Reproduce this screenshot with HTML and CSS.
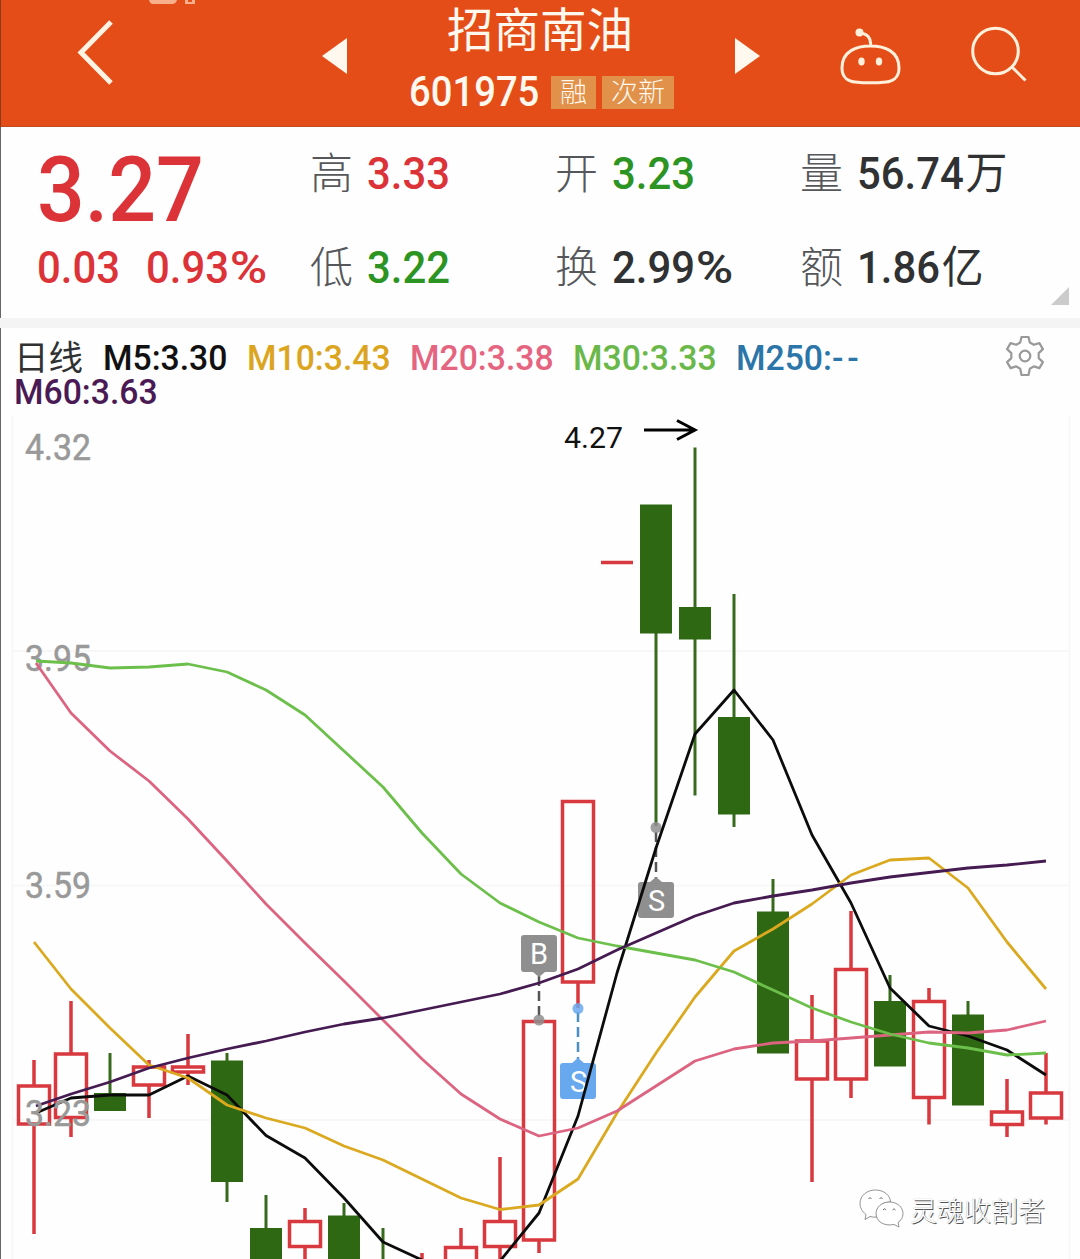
FILE: index.html
```html
<!DOCTYPE html>
<html lang="zh-CN">
<head>
  <meta charset="utf-8"/>
  <title>招商南油 601975</title>
  <link rel="stylesheet" href="styles.css">
</head>
<body>
  <!-- Header -->
  <header class="topbar">
    <svg class="back" viewBox="0 0 44 70" width="44" height="70"><path d="M37 5 7 35.500 37 66"/></svg>
    <svg class="status" viewBox="0 0 50 5" width="50" height="5"><path d="M1 0h28q-1 4-5 4H5Q2 4 1 0zM37 0h3v2h4V0h3v4H37z"/></svg>
    <svg class="prev" viewBox="0 0 25 36" width="25" height="36"><path d="M25 0v36L0 18z"/></svg>
    <div class="stock">
      <div class="name">招商南油</div>
      <div class="code">
        <span class="num">601975</span>
        <span class="badge">融</span>
        <span class="badge">次新</span>
      </div>
    </div>
    <svg class="next" viewBox="0 0 25 36" width="25" height="36"><path d="M0 0v36l25-18z"/></svg>
    <svg class="robot" viewBox="0 0 64 58" width="64" height="58">
      <path d="M32.500 19c14 0 28.500 5 28.500 22 0 10-7 13.500-13 14-9 1-22 1-31 0-6-.5-13-4-13-14 0-17 14.500-22 28.500-22zM32.500 19c1-8-3-12.500-11-13"/>
      <circle class="dot" cx="21.500" cy="5.500" r="4"/>
      <ellipse class="dot" cx="23.500" cy="34.500" rx="3.200" ry="4"/>
      <ellipse class="dot" cx="41" cy="34.500" rx="3.200" ry="4"/>
    </svg>
    <svg class="search" viewBox="0 0 58 58" width="58" height="58"><circle cx="25.500" cy="25" r="22.800"/><path d="M42 41 55.500 54.500"/></svg>
  </header>

  <!-- Quote -->
  <section class="quote">
    <div class="price"><span class="num red">3.27</span></div>
    <div class="cell"><label>高</label><span class="num red">3.33</span></div>
    <div class="cell"><label>开</label><span class="num green">3.23</span></div>
    <div class="cell"><label>量</label><span class="num">56.74<i>万</i></span></div>
    <div class="change"><span class="num red">0.03</span><span class="num red">0.93<b>%</b></span></div>
    <div class="cell"><label>低</label><span class="num green">3.22</span></div>
    <div class="cell"><label>换</label><span class="num">2.99<b>%</b></span></div>
    <div class="cell"><label>额</label><span class="num">1.86<i>亿</i></span></div>
    <span class="corner"></span>
  </section>

  <!-- Moving averages -->
  <section class="legend">
    <div class="row">
      <span class="period">日线</span>
      <span class="ma m5">M5:3.30</span>
      <span class="ma m10">M10:3.43</span>
      <span class="ma m20">M20:3.38</span>
      <span class="ma m30">M30:3.33</span>
      <span class="ma m250">M250:<b>--</b></span>
      <svg class="gear" viewBox="0 0 42 42" width="42" height="42">
        <path d="M17.500 2h7l1.300 5.500 4 2.300 5.600-1.700 3.500 6-4.200 4v5l4.200 4-3.500 6-5.600-1.700-4 2.300L24.500 40h-7l-1.300-6.300-4-2.300-5.600 1.700-3.500-6 4.200-4v-5l-4.200-4 3.500-6 5.600 1.700 4-2.300z"/>
        <circle cx="21" cy="21" r="5.300"/>
      </svg>
    </div>
    <div class="row"><span class="ma m60">M60:3.63</span></div>
  </section>

  <!-- K line chart -->
  <svg class="chart" viewBox="0 411 1080 848" width="1080" height="848">
    <path class="grid" d="M12 651H1069M12 885.500H1069M12 1120H1069M12.500 416V1259M1069.500 416V1259"/>

    <g class="axis">
      <text x="25" y="459.500" textLength="66" lengthAdjust="spacingAndGlyphs">4.32</text>
      <text x="25" y="670.500" textLength="66" lengthAdjust="spacingAndGlyphs">3.95</text>
      <text x="25" y="898" textLength="66" lengthAdjust="spacingAndGlyphs">3.59</text>
    </g>

    <g class="up">
      <path d="M34 1060V1086M34 1124V1234M71 1001V1054M71 1117V1137M149 1060V1067M149 1085V1118M188 1034V1067M188 1072V1085M305 1208V1221M305 1247V1259M422 1253V1259M461 1228V1247M500 1157V1221M500 1247V1259M539 1240V1253M578 982V1008M812 995V1041M812 1079V1182M851 911V970M851 1079V1098M929 988V1002M929 1097V1124.500M1007 1079V1112M1007 1125V1137M1046 1053V1093M1046 1118V1124.500M601 562.500H633"/>
      <rect x="18.500" y="1086" width="31" height="38"/>
      <rect x="55.500" y="1054" width="31" height="63.500"/>
      <rect x="133.500" y="1067" width="31" height="18"/>
      <rect x="172.500" y="1067" width="31" height="5"/>
      <rect x="289.500" y="1221.500" width="31" height="25"/>
      <rect x="445.500" y="1247.500" width="31" height="25"/>
      <rect x="484.500" y="1221.500" width="31" height="25"/>
      <rect x="523.500" y="1021.500" width="31" height="218.500"/>
      <rect x="562.500" y="801.500" width="31" height="180.500"/>
      <rect x="796.500" y="1041" width="31" height="38"/>
      <rect x="835.500" y="969.500" width="31" height="109.500"/>
      <rect x="913.500" y="1001.500" width="31" height="96"/>
      <rect x="991.500" y="1112" width="31" height="12.500"/>
      <rect x="1030.500" y="1093" width="31" height="25"/>
    </g>

    <g class="down">
      <path d="M110 1053V1095M227 1053V1202M266 1195V1230M344 1203V1220M383 1228V1259M656 630V826M695 447.500V795.500M734 594V827M773 879V915M890 975V1005M968 1001V1020"/>
      <rect x="94" y="1093" width="32" height="18"/>
      <rect x="211" y="1060.500" width="32" height="121.500"/>
      <rect x="250" y="1228" width="32" height="40"/>
      <rect x="328" y="1215.500" width="32" height="50"/>
      <rect x="640" y="504.500" width="32" height="129"/>
      <rect x="679" y="607" width="32" height="32.500"/>
      <rect x="718" y="717" width="32" height="97.500"/>
      <rect x="757" y="911.500" width="32" height="142"/>
      <rect x="874" y="1001" width="32" height="65.500"/>
      <rect x="952" y="1014.500" width="32" height="91"/>
    </g>

    <!-- Trade marks -->
    <g class="mark">
      <path class="stem" d="M539 976V1020"/>
      <circle cx="539" cy="1020" r="5.500"/>
      <path d="M524 935h30q3 0 3 3v31q0 3-3 3h-9l-6 5-6-5h-9q-3 0-3-3v-31q0-3 3-3z"/>
      <text x="539" y="963.500">B</text>
      <path class="stem" d="M656 832V880"/>
      <circle cx="656" cy="827.500" r="5.500"/>
      <path d="M641 882h9l6-5 6 5h9q3 0 3 3v30q0 3-3 3h-30q-3 0-3-3v-30q0-3 3-3z"/>
      <text x="656.500" y="911">S</text>
    </g>
    <g class="mark blue">
      <path class="stem" d="M578 1012V1060"/>
      <circle cx="578" cy="1008.500" r="5.500"/>
      <path d="M563 1063h9l6-5 6 5h9q3 0 3 3v30q0 3-3 3h-30q-3 0-3-3v-30q0-3 3-3z"/>
      <text x="578.500" y="1091.500">S</text>
    </g>

    <g class="lines">
      <polyline class="l5" points="36,1113 71,1098 110,1095 149,1095 188,1076 227,1095 266,1135.500 305,1158 344,1198 383,1242 422,1260 461,1275 500,1261 539,1213 578,1116 617,973 656,848 695,734 734,690 773,740 812,835 851,903 890,988 929,1026 968,1036 1007,1050 1046,1075"/>
      <polyline class="l10" points="34,942 71,989 110,1028 149,1065 188,1078 227,1105 266,1118 305,1128 344,1146 383,1160 422,1179 461,1198 500,1209.500 539,1205 578,1179 617,1113 656,1053 695,997 734,951 773,929 812,904 851,875 890,860 929,858 968,888 1007,942 1046,989"/>
      <polyline class="l20" points="36,663 71,713 110,751 149,781 188,819 227,861 266,904 305,943 344,981 383,1020 422,1059 461,1094 500,1119 539,1136 578,1128 617,1111 656,1086 695,1061 734,1049 773,1043 812,1041 851,1038 890,1035 929,1032 968,1033 1007,1030 1046,1021"/>
      <polyline class="l30" points="36,661 71,663 110,668 149,667 188,664 227,672 266,690 305,715 344,751 383,787 422,833 461,874 500,903 539,922 578,938 617,946 656,953 695,960 734,972 773,990 812,1008 851,1022 890,1034 929,1043 968,1048 1007,1055 1046,1053"/>
      <polyline class="l60" points="36,1106 71,1094 110,1082 149,1068 188,1058 227,1049 266,1041 305,1032 344,1024 383,1018 422,1010 461,1002 500,994 539,983 578,969 617,950 656,933 695,916 734,903 773,896 812,890 851,883 890,877 929,872.500 968,868 1007,865 1046,861"/>
    </g>

    <g class="axis"><text x="25" y="1126" textLength="66" lengthAdjust="spacingAndGlyphs">3.23</text></g>

    <text class="peak" x="564" y="447.500" textLength="59" lengthAdjust="spacingAndGlyphs">4.27</text>
    <path class="arrow" d="M644 430H695M677 420.500 695 430 677 439.500"/>

    <!-- Watermark -->
    <g class="wm">
      <path d="M875.500 1190c9 0 15 6 15 12-8 0-14 5-14 12q0 2 .5 3-4 .5-7-.5l-5 3 1-5c-4-3-6-7-6-11 0-8 7-13.500 15.500-13.500z"/>
      <path d="M889.500 1202c8 0 13.500 5.500 13.500 11.500 0 4-2 7-5 9l1 4.500-5-2.500c-10 2-18-3-18-11 0-6 5.500-11.500 13.500-11.500z"/>
      <path class="eyes" d="M868.500 1199q1.500-3 3 0M879.500 1199q1.500-3 3 0M883 1210q1.500-2.500 3 0M892.500 1210q1.500-2.500 3 0"/>
      <text x="910" y="1220.500">灵魂收割者</text>
    </g>
  </svg>
</body>
</html>
```

FILE: styles.css
```css
* {
  box-sizing: border-box;
}
body {
  margin: 0;
  width: 1080px;
  height: 1259px;
  overflow: hidden;
  background: #fefefe;
  box-shadow: inset 1px 0 0 #666;
  font-family: Roboto, "Noto Sans CJK SC", sans-serif;
  color: #303133;
}
svg {
  display: block;
  flex: none;
}

/* narrow digits */
.num {
  display: inline-block;
  font-weight: 500;
  transform: scaleX(0.92);
  transform-origin: left;
  white-space: nowrap;
}
.red {
  color: #dc3338;
}
.green {
  color: #2c9422;
}

.topbar {
  display: flex;
  align-items: flex-start;
  height: 127px;
  background: #e54d18;
  border-bottom: 1px solid #c04a22;
  border-left: 1px solid #8c3a1c;
}
.topbar svg {
  fill: #fff8ee;
}
.topbar .back {
  margin: 17px 0 0 73px;
  fill: none;
  stroke: #fff3e4;
  stroke-width: 5;
}
.topbar .status {
  margin-left: 30px;
  fill: #f8b08c;
}
.prev {
  margin: 38px 0 0 124px;
}
.stock {
  width: 388px;
  padding: 4px 0 0 62px;
  color: #fff8ee;
}
.name {
  padding-left: 38px;
  font-size: 46.5px;
  line-height: 54px;
}
.code {
  display: flex;
  align-items: center;
  margin-top: 15px;
  height: 38px;
}
.code .num {
  width: 142px;
  font-size: 42px;
  line-height: 38px;
  transform: scaleX(0.91);
}
.badge {
  height: 33px;
  margin-right: 6px;
  padding: 0 9px;
  background: #e19149;
  font-size: 27px;
  font-weight: 300;
  line-height: 34px;
}
.next {
  margin-top: 38px;
}
.robot {
  margin: 27px 0 0 78px;
}
.topbar .robot,
.topbar .search {
  fill: none;
  stroke: #fff0dc;
  stroke-width: 3;
}
.robot .dot {
  fill: #fff0dc;
  stroke: none;
}
.search {
  margin: 26px 0 0 68px;
}

.quote {
  position: relative;
  display: grid;
  grid-template-columns: 273px 245px 245px 1fr;
  grid-template-rows: 94px 94px;
  height: 201px;
  padding-left: 37px;
  border-bottom: 10px solid #f4f4f5;
}
.quote .num {
  font-size: 44.5px;
  line-height: 94px;
  transform: scaleX(0.94);
}
.quote .price .num {
  font-size: 91px;
  line-height: 126px;
  transform: scaleX(0.925);
}
.change {
  display: flex;
}
.change .num:first-child {
  width: 109px;
}
.cell {
  display: flex;
}
.cell label {
  width: 57px;
  font-size: 43px;
  font-weight: 300;
  line-height: 94px;
  color: #55575a;
}
.num i {
  margin-left: 2px;
  font-style: normal;
  font-weight: 400;
}
.num b {
  display: inline-block;
  margin-left: 1px;
  font-weight: 500;
  transform: scaleX(1.22);
  transform-origin: left;
}
.corner {
  position: absolute;
  right: 11px;
  bottom: 13px;
  border-left: 18px solid transparent;
  border-bottom: 18px solid #cbcbcb;
}

.legend {
  height: 83px;
  padding: 13px 0 0 14px;
}
.row {
  display: flex;
  height: 34px;
  font-size: 35.5px;
  line-height: 34px;
}
.period {
  width: 89px;
  font-size: 34.5px;
}
.ma {
  width: 163px;
  font-weight: 500;
  transform: scaleX(0.95);
  transform-origin: left;
  white-space: nowrap;
}
.ma b {
  font-weight: 500;
  letter-spacing: 4px;
}
.m5 {
  width: 144px;
  color: #111;
}
.m10 {
  color: #dca51f;
}
.m20 {
  color: #e56580;
}
.m30 {
  color: #6ab84a;
}
.m250 {
  color: #2b75a8;
}
.m60 {
  color: #4a1a55;
}
.gear {
  margin: -6px 0 0 105px;
  fill: none;
  stroke: #999;
  stroke-width: 2.2;
  stroke-linejoin: round;
}

.grid {
  stroke: #f7f7f7;
  stroke-width: 2;
}
.axis text {
  font-size: 36px;
  fill: #999;
  stroke: #999;
  stroke-width: 0.5;
}
.up {
  fill: none;
  stroke: #d8393f;
  stroke-width: 3.5;
}
.down {
  fill: #2f6812;
}
.down path {
  stroke: #376a1c;
  stroke-width: 3;
}
.mark {
  fill: #8f8f8f;
}
.mark circle {
  fill-opacity: 0.85;
}
.mark .stem {
  stroke: #555;
  stroke-width: 2.5;
  stroke-dasharray: 10 5;
}
.mark text {
  font-size: 29px;
  text-anchor: middle;
  fill: #fff;
}
.blue {
  fill: #68a8ee;
}
.blue .stem {
  stroke: #4c8fc4;
}
.lines {
  fill: none;
  stroke-width: 2.8;
  stroke-linejoin: round;
}
.l5 {
  stroke: #0c0c0c;
}
.l10 {
  stroke: #dba91f;
}
.l20 {
  stroke: #dc6480;
}
.l30 {
  stroke: #6cbf4b;
}
.l60 {
  stroke: #451b52;
}
.peak {
  font-size: 29.5px;
  fill: #111;
}
.arrow {
  fill: none;
  stroke: #000;
  stroke-width: 3;
}
.wm {
  fill: #fff;
  stroke: #777;
  stroke-width: 0.8;
}
.wm .eyes {
  fill: none;
  stroke: #444;
}
.wm text {
  font-size: 27px;
  font-weight: 300;
  stroke: none;
  text-shadow: 1px 1px 0 #555, 0 0 1px #999;
}
```
